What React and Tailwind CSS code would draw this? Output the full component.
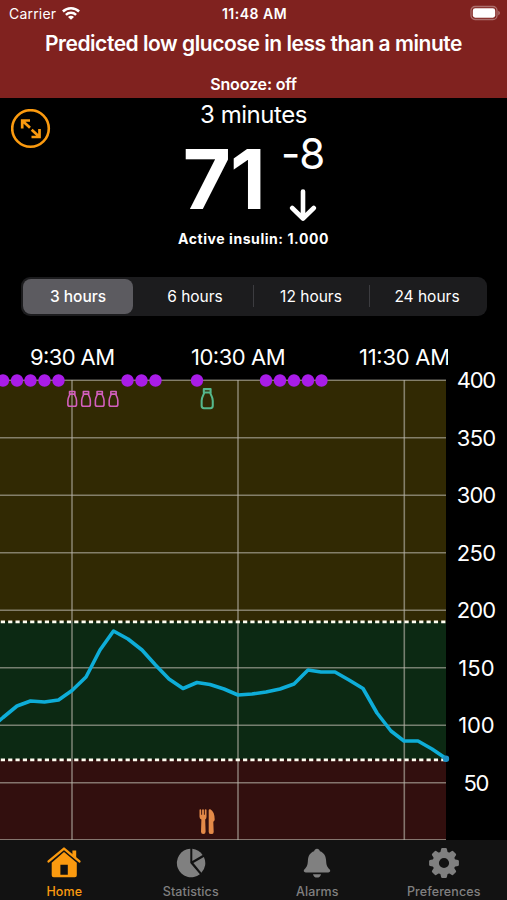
import { useState } from 'react';
import clsx from 'clsx';

const ranges = ['3 hours', '6 hours', '12 hours', '24 hours'];

// [x, y] in chart pixels, one reading every five minutes
const readings = [
  [-1, 379], [3, 375.5], [17, 364], [30.5, 359], [44.5, 360], [58.5, 358], [72, 348.5], [86, 335],
  [100, 308], [113.5, 289], [128, 297], [142, 308], [155.5, 323], [169, 337], [183, 346.5],
  [197, 340.5], [210, 342.5], [224, 347], [238, 353], [252, 352], [266, 350], [280, 347],
  [294, 342], [308, 328], [321, 330], [335, 330], [349, 338], [363, 346.5], [377, 371],
  [391, 389], [404, 399], [418, 399], [432, 407], [446, 416.5],
];

const basalDots = [3, 17, 30.5, 44.5, 58.5, 127.5, 141.5, 155.5, 197, 266, 280, 294, 308, 321.5];
const smallBottles = [72.2, 86, 99.7, 113.5];

const yLabels = [400, 350, 300, 250, 200, 150, 100, 50];
const yFor = (value) => 498 - value * 1.15;

const HomeIcon = () => (
  <svg viewBox="0 0 34 32" className="h-8 w-[34px]">
    <path d="M1.6 14.4 17 1.6l15.4 12.8" fill="none" stroke="currentColor" strokeWidth="2.4" strokeLinecap="round" strokeLinejoin="round" />
    <path d="M25.4 3.4h3.8v8l-3.8-3.2z" fill="currentColor" />
    <path fillRule="evenodd" d="M17 5 29.8 15.7v12.500q0 2-2 2H6.700q-2 0-2-2V15.700zM13.400 17.800v10h7.400v-10z" fill="currentColor" />
  </svg>
);

const StatsIcon = () => (
  <svg viewBox="0 0 32 32" className="size-8">
    <path d="M15.3 16V1.7A14.3 14.3 0 1 0 24.9 27.3z" fill="currentColor" />
    <path d="M17.3 14V1.7A14.3 14.3 0 0 1 27.6 8z" fill="currentColor" />
    <path d="M18.4 16 28.9 9.9A14.3 14.3 0 0 1 26.4 25.8z" fill="currentColor" />
  </svg>
);

const BellIcon = () => (
  <svg viewBox="0 0 32 32" className="size-8">
    <path d="M16 1.8c1.5 0 2.6 1 2.9 2.4 4.2 1.3 6 5 6.2 9.3.2 4.5 1.1 6.500 3.400 8.700 1.300 1.200.9 3.200-1.200 3.200H4.700c-2.100 0-2.500-2-1.200-3.200 2.300-2.200 3.200-4.200 3.400-8.700.2-4.300 2-8 6.200-9.300.3-1.400 1.400-2.400 2.900-2.400z" fill="currentColor" />
    <path d="M12 27.2h8c-.3 2-1.9 3.4-4 3.4s-3.700-1.400-4-3.400z" fill="currentColor" />
  </svg>
);

const GearIcon = () => (
  <svg viewBox="-16 -16 32 32" className="size-8">
    {[0, 45, 90, 135, 180, 225, 270, 315].map((a) => (
      <path key={a} transform={`rotate(${a})`} d="M-4-9-2.9-14Q-2.7-14.9-1.8-14.9h3.6q.9 0 1.1.9L4-9z" fill="currentColor" />
    ))}
    <circle r="8.3" fill="none" stroke="currentColor" strokeWidth="6.4" />
  </svg>
);

const tabs = [
  { label: 'Home', icon: HomeIcon },
  { label: 'Statistics', icon: StatsIcon },
  { label: 'Alarms', icon: BellIcon },
  { label: 'Preferences', icon: GearIcon },
];

function StatusBar() {
  return (
    <div className="grid h-7 grid-cols-3 items-center pr-[7px] pb-0.5 pl-[9px] text-[14px]">
      <div className="flex items-center gap-1.5">
        <span className="tracking-[0.2px]">Carrier</span>
        <svg viewBox="0 0 18 14" className="h-3.5 w-[18px]" fill="none" stroke="currentColor" strokeWidth="2.5">
          <path d="M.9 5.5a11.8 11.8 0 0 1 16.200 0" />
          <path d="M3.9 8.9a7.4 7.4 0 0 1 10.200 0" />
          <path d="M9 13.8 6 11a4.2 4.2 0 0 1 6 0z" fill="currentColor" stroke="none" />
        </svg>
      </div>
      <span className="text-center font-semibold tracking-[0.5px] whitespace-nowrap">11:48 AM</span>
      <svg viewBox="0 0 30 16" className="h-4 w-[30px] justify-self-end">
        <rect x="1" y="1.5" width="26" height="13" rx="4" fill="none" stroke="white" strokeOpacity="0.35" strokeWidth="1.3" />
        <rect x="2.8" y="3.3" width="22.4" height="9.4" rx="2.4" fill="white" />
        <path d="M28.3 5.8v4.600q1.600-.8 1.600-2.300t-1.600-2.300z" fill="white" fillOpacity="0.4" />
      </svg>
    </div>
  );
}

function Bottle({ x, y, scale, stroke, color }) {
  return (
    <g transform={`translate(${x} ${y}) scale(${scale})`} fill="none" stroke={color} strokeWidth={stroke} strokeLinejoin="round">
      <path d="M-3.3.8h6.600v3.300h-6.600z" />
      <path d="M-3 4.100C-3.300 6.800-5.400 8.200-5.400 12v5q0 2.300 2.300 2.300h6.200Q5.400 19.300 5.400 17v-5C5.400 8.200 3.300 6.800 3 4.100" />
    </g>
  );
}

function GlucoseChart() {
  return (
    <svg viewBox="0 0 507 498" className="block h-[498px] w-full font-[Inter]">
      <defs>
        <clipPath id="plot">
          <rect width="448" height="498" />
        </clipPath>
      </defs>

      <rect y="38" width="446" height="241.5" fill="#312903" />
      <rect y="279.5" width="446" height="138" fill="#0c2913" />
      <rect y="417.5" width="446" height="80.5" fill="#320f0e" />

      <g stroke="#b8b4aa" strokeOpacity="0.62" strokeWidth="1.6">
        {yLabels.map((v) => <line key={v} x1="0" x2="446" y1={yFor(v) + 0.3} y2={yFor(v) + 0.3} />)}
        {[72, 238, 404.3].map((x) => <line key={x} x1={x} x2={x} y1="38" y2="498" />)}
        <line x1="0" x2="446" y1="497.8" y2="497.8" />
      </g>

      {[190, 70].map((v) => (
        <line key={v} x1="0.8" x2="446" y1={yFor(v) + 0.3} y2={yFor(v) + 0.3} stroke="#fffdf0" strokeWidth="2.8" strokeDasharray="4.2 3.14" />
      ))}

      <g fill="white" fontSize="22" clipPath="url(#plot)">
        <text x="30" y="23" textLength="85">9:30 AM</text>
        <text x="191" y="23" textLength="94.5">10:30 AM</text>
        <text x="359" y="23" textLength="91">11:30 AM</text>
      </g>
      <g fill="white" fontSize="22" textAnchor="middle">
        {yLabels.map((v) => (
          <text key={v} x="476.5" y={yFor(v) + 8.3} textLength={v > 50 ? (v > 199 ? 39.5 : 36.5) : 26}>{v}</text>
        ))}
      </g>

      <g fill="#a91ce8">
        {basalDots.map((x) => <circle key={x} cx={x} cy="38.5" r="6.2" />)}
      </g>
      {smallBottles.map((x) => <Bottle key={x} x={x} y={48.8} scale={0.8} stroke={2} color="#d35fbe" />)}
      <Bottle x={207.2} y={46.3} scale={1.03} stroke={2} color="#55b88c" />

      <g transform="translate(199 467)" fill="#e48a48">
        <path d="M.5 1.200Q.5.300 1.300.300t.9.900v4.600h.9V1.200q0-.9.900-.9t.9.900v4.600h.9V1.200q0-.9.900-.9t.8.900v6.500q0 2-1.300 2.900l.4 12.200q0 2.300-2.300 2.300t-2.300-2.300l.4-12.200Q.5 9.700.5 7.700z" />
        <path d="M9.700 1.500q0-1.600 1.600-1.200 4.200 2 4.400 10.200 0 1.500-1.400 2.200l.4 10.200q0 2.200-2.500 2.200t-2.500-2.200z" />
      </g>

      <polyline points={readings.map((p) => p.join(',')).join(' ')} fill="none" stroke="#0eadd8" strokeWidth="3.6" strokeLinejoin="round" />
      <circle cx="446" cy="416.8" r="3.2" fill="#1b8fc4" />
    </svg>
  );
}

export default function App() {
  const [range, setRange] = useState('3 hours');
  const [tab, setTab] = useState('Home');

  return (
    <div className="flex h-[900px] w-[507px] flex-col overflow-hidden bg-black font-[Inter,sans-serif] text-white">
      <header className="h-[98px] shrink-0 bg-[#80221f]">
        <StatusBar />
        <h1 className="h-[30px] text-center text-[21px] leading-[31px] font-semibold tracking-[-0.46px] whitespace-nowrap">
          Predicted low glucose in less than a minute
        </h1>
        <p className="pt-3.5 text-center text-[16px] leading-6 font-semibold tracking-[-0.15px]">Snooze: off</p>
      </header>

      <section className="grid h-[179px] shrink-0 grid-cols-[100px_1fr_100px]">
        <button className="mt-[11px] ml-[11px] size-10 text-[#fb9a0f]">
          <svg viewBox="0 0 40 40" className="size-10" fill="none" stroke="currentColor" strokeWidth="2.7">
            <circle cx="19.5" cy="19.5" r="18.3" strokeWidth="2.6" />
            <path d="M19 11.500H11.200v8M11.200 11.500l7.800 7.300M20.500 28h8v-8M28.500 28l-7.800-7.300" />
          </svg>
        </button>
        <div className="flex flex-col items-center">
          <p className="h-[33px] pt-px text-[24px] leading-8 tracking-[-0.45px] whitespace-nowrap">3 minutes</p>
          <div className="flex h-[97px] gap-4">
            <span className="text-[83px] leading-[97px] font-bold tracking-[-1px]">71</span>
            <div className="flex flex-col items-center">
              <span className="h-[58px] text-[42px] leading-[46px] tracking-[-1px] whitespace-nowrap">-8</span>
              <svg viewBox="0 0 28 34" className="h-[34px] w-7" fill="none" stroke="currentColor" strokeWidth="4.6" strokeLinecap="round" strokeLinejoin="round">
                <path d="M14 2.500V29M3.200 19 14 29.500 24.800 19" />
              </svg>
            </div>
          </div>
          <p className="text-[14px] leading-[22px] font-bold tracking-[0.56px] whitespace-nowrap">Active insulin: 1.000</p>
        </div>
      </section>

      <div className="mr-5 ml-[21px] grid h-[39px] shrink-0 grid-cols-[114px_1fr_1fr_1fr] rounded-[9px] bg-[#1c1c1e] p-0.5 text-[15.5px]">
        {ranges.map((r, i) => (
          <button
            key={r}
            onClick={() => setRange(r)}
            className={clsx(
              'relative rounded-[8px] whitespace-nowrap',
              r === range && 'mr-1 bg-[#5c5b60] font-medium',
            )}
          >
            {r}
            {i > 1 && <span className="absolute top-1.5 left-0 h-[22px] w-px bg-[#3c3c40]" />}
          </button>
        ))}
      </div>

      <main className="mt-[26px] shrink-0">
        <GlucoseChart />
      </main>

      <nav className="grid h-[60px] shrink-0 grid-cols-4 bg-[#121212] pl-px">
        {tabs.map(({ label, icon: Icon }) => (
          <button
            key={label}
            onClick={() => setTab(label)}
            className={clsx(
              'flex flex-col items-center justify-start pt-[7px] text-[12.5px] leading-4 font-medium tracking-[0.1px]',
              label === tab ? 'text-[#fb9a0f]' : 'text-[#808080]',
            )}
          >
            <Icon />
            <span className="mt-[5px]">{label}</span>
          </button>
        ))}
      </nav>
    </div>
  );
}
